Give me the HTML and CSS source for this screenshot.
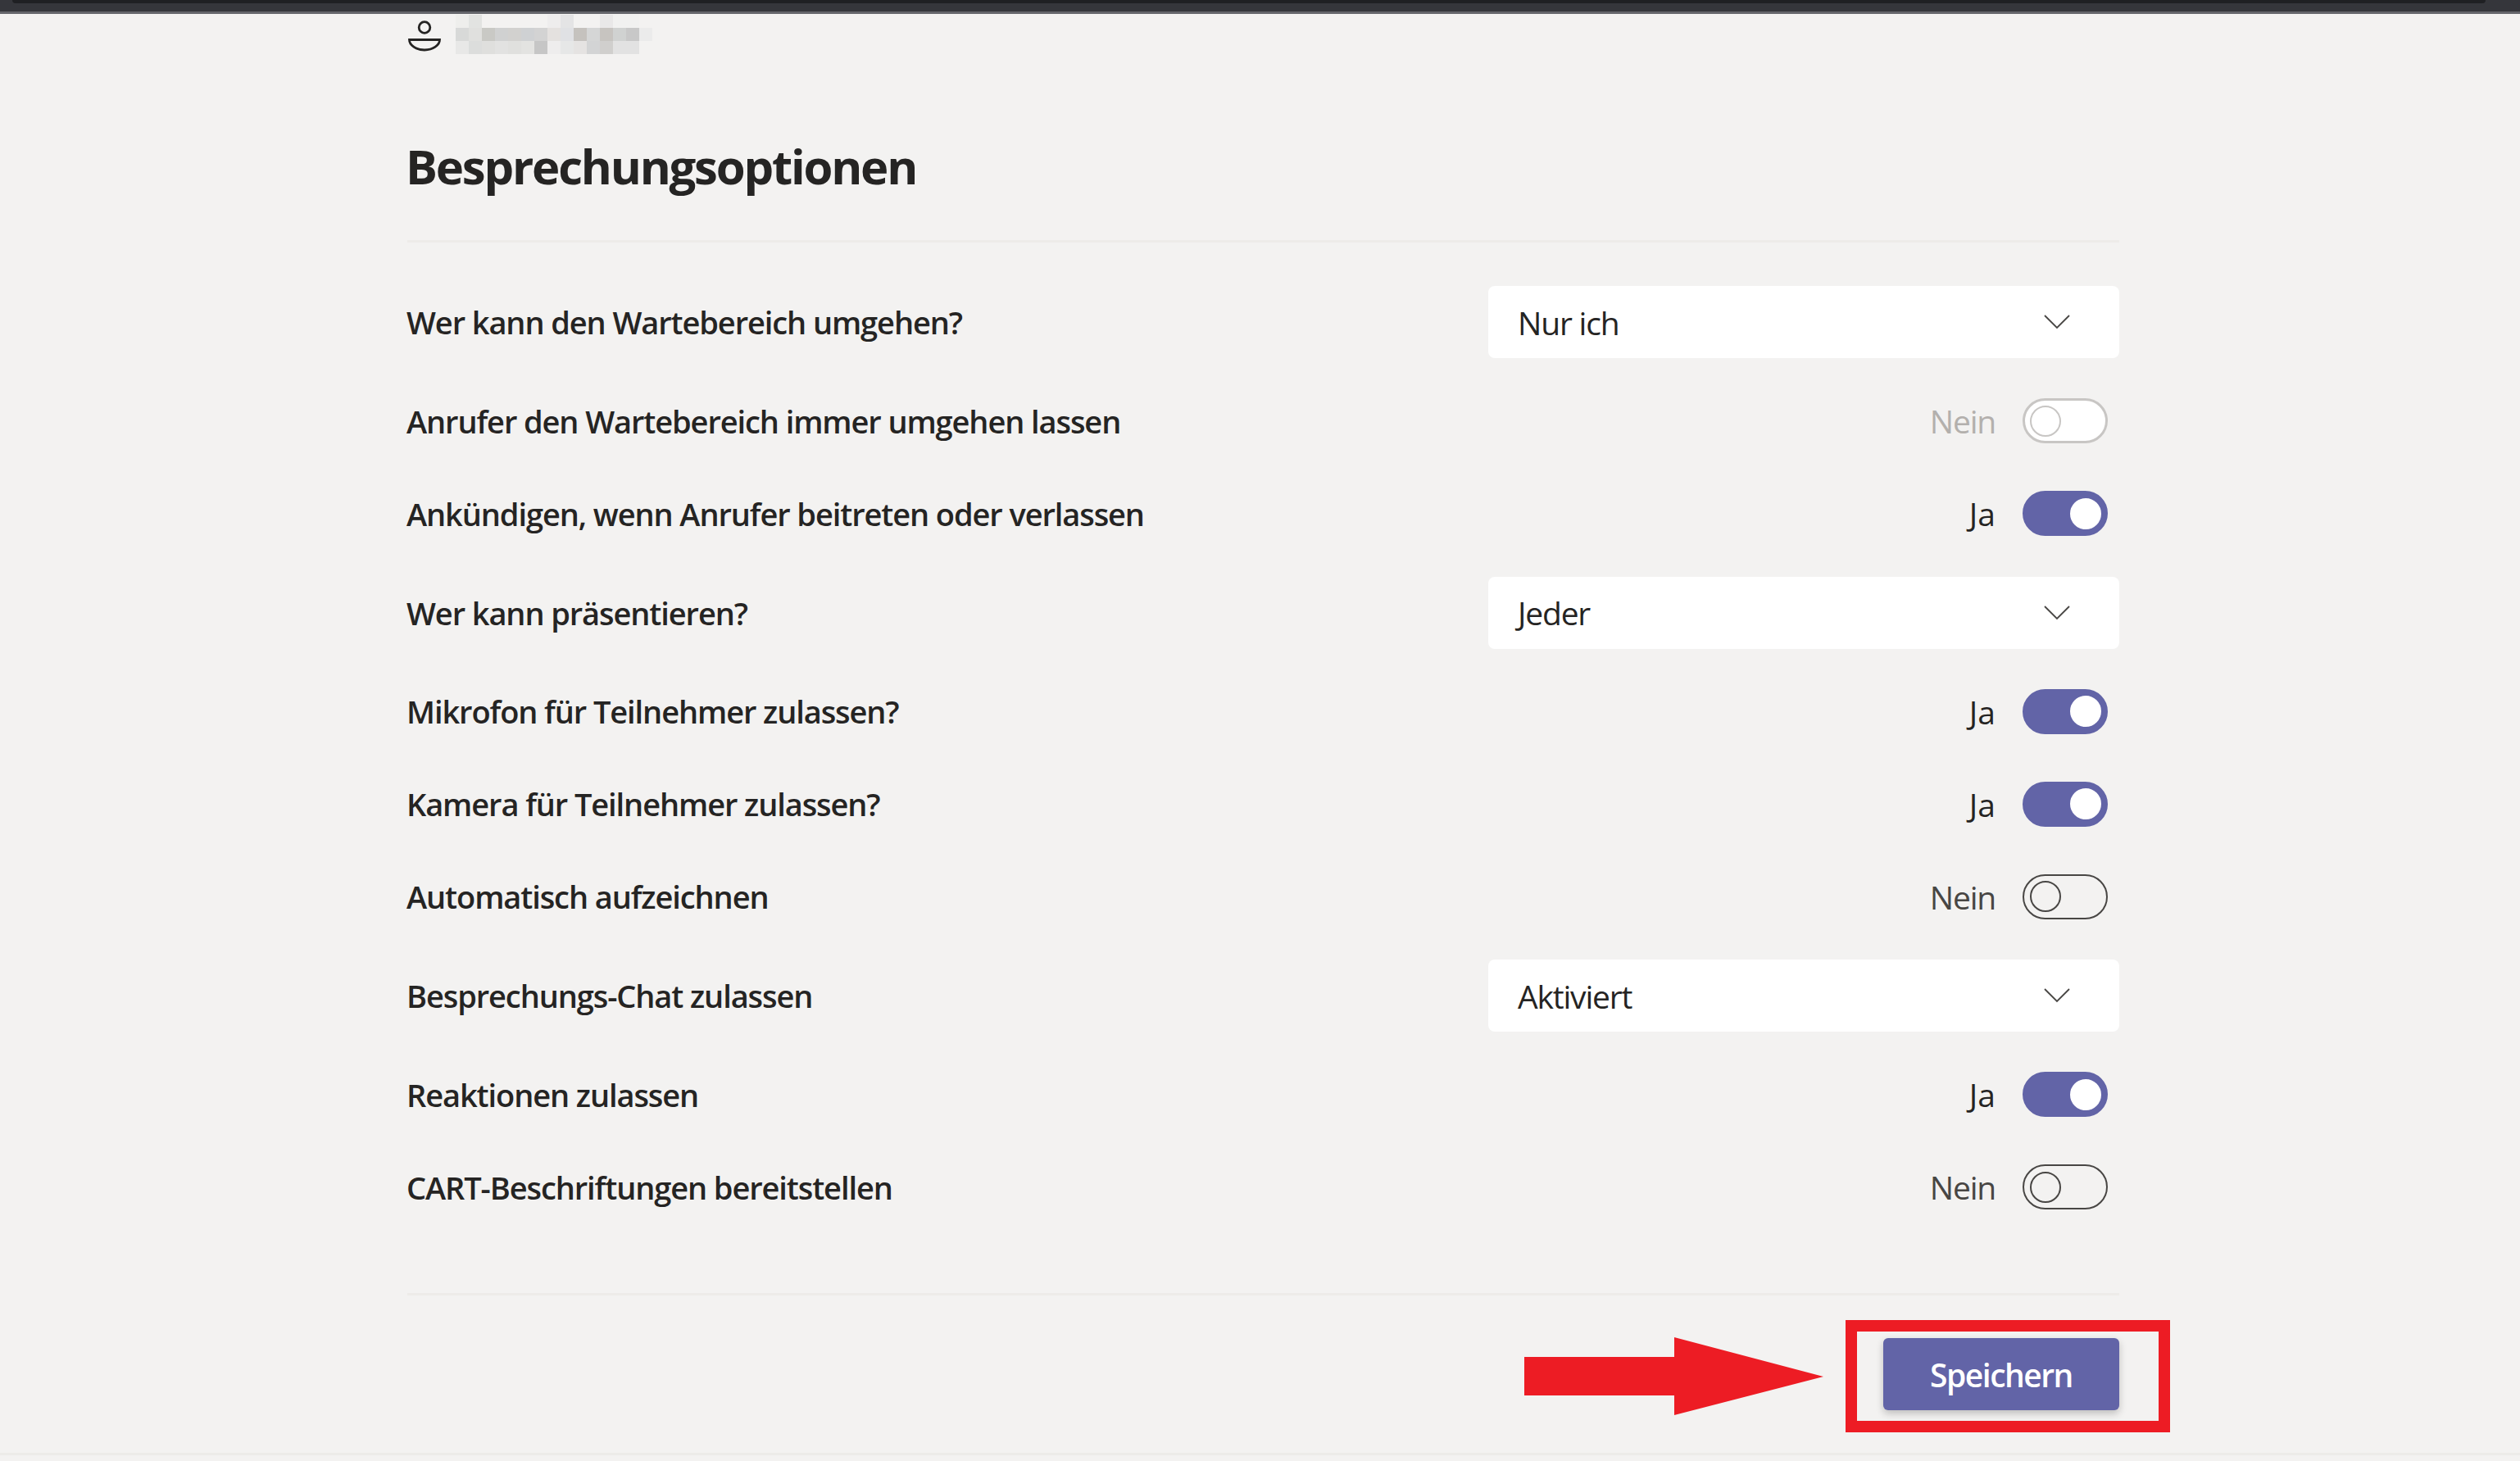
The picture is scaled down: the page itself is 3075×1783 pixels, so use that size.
FILE: index.html
```html
<!DOCTYPE html>
<html lang="de">
<head>
<meta charset="utf-8">
<title>Besprechungsoptionen</title>
<link rel="stylesheet" href="styles.css">
</head>
<body>
<div class="topbar"><div class="topbar-strip"></div></div>
<main class="page">
  <div class="user">
    <svg class="user-icon" width="42" height="40" viewBox="0 0 42 40" fill="none" stroke="#252423" stroke-width="2.800">
      <circle cx="21" cy="9.500" r="6.800"/>
      <path d="M2.500 24.500h37c0 6.500-8 12.500-18.500 12.500S2.500 31 2.500 24.500z"/>
    </svg>
    <svg class="user-blur" width="240" height="48" viewBox="0 0 15 3" shape-rendering="crispEdges">
      <rect x="0" y="0" width="1" height="1" fill="#eeeeec"/><rect x="1" y="0" width="1" height="1" fill="#e2e3e1"/><rect x="7" y="0" width="1" height="1" fill="#eeeded"/><rect x="8" y="0" width="1" height="1" fill="#e4e4e5"/><rect x="11" y="0" width="1" height="1" fill="#e9e8e8"/><rect x="12" y="0" width="2" height="1" fill="#f1f1f0"/>
      <rect x="0" y="1" width="1" height="1" fill="#d8d9d8"/><rect x="1" y="1" width="1" height="1" fill="#e0e0de"/><rect x="2" y="1" width="1" height="1" fill="#c9c9c5"/><rect x="3" y="1" width="1" height="1" fill="#d0d1d1"/><rect x="4" y="1" width="1" height="1" fill="#d2d1cf"/><rect x="5" y="1" width="1" height="1" fill="#cfd1d3"/><rect x="6" y="1" width="1" height="1" fill="#d3d3d3"/><rect x="7" y="1" width="1" height="1" fill="#e4e1df"/><rect x="8" y="1" width="1" height="1" fill="#e0e1e4"/><rect x="9" y="1" width="1" height="1" fill="#c5c2be"/><rect x="10" y="1" width="1" height="1" fill="#d5d6d6"/><rect x="11" y="1" width="1" height="1" fill="#c7c4c0"/><rect x="12" y="1" width="1" height="1" fill="#d0d2d1"/><rect x="13" y="1" width="1" height="1" fill="#c8c8c8"/><rect x="14" y="1" width="1" height="1" fill="#ebebeb"/>
      <rect x="0" y="2" width="1" height="1" fill="#e8e8e7"/><rect x="1" y="2" width="1" height="1" fill="#dcdddc"/><rect x="2" y="2" width="1" height="1" fill="#dfdfdd"/><rect x="3" y="2" width="1" height="1" fill="#e2e2e1"/><rect x="4" y="2" width="1" height="1" fill="#e0e0de"/><rect x="5" y="2" width="1" height="1" fill="#e3e3e1"/><rect x="6" y="2" width="1" height="1" fill="#c6c6c6"/><rect x="7" y="2" width="1" height="1" fill="#eeeded"/><rect x="8" y="2" width="1" height="1" fill="#e6e7e7"/><rect x="9" y="2" width="1" height="1" fill="#e5e3e2"/><rect x="10" y="2" width="1" height="1" fill="#d3d4d5"/><rect x="11" y="2" width="1" height="1" fill="#d0cfcd"/><rect x="12" y="2" width="2" height="1" fill="#e2e2e2"/>
    </svg>
  </div>
  <h1 class="title"><span class="title-text">Besprechungsoptionen</span></h1>
  <section class="options">
    <div class="row row-select">
      <span class="label">Wer kann den Wartebereich umgehen?</span>
      <div class="select"><span>Nur ich</span><svg class="chevron" width="32" height="18" viewBox="0 0 32 18" fill="none" stroke="#484644" stroke-width="1.800"><path d="M1 1l15 15L31 1"/></svg></div>
    </div>
    <div class="row row-toggle">
      <span class="label">Anrufer den Wartebereich immer umgehen lassen</span>
      <div class="control is-disabled"><span class="state">Nein</span><span class="toggle"><i class="knob"></i></span></div>
    </div>
    <div class="row row-toggle">
      <span class="label">Ankündigen, wenn Anrufer beitreten oder verlassen</span>
      <div class="control is-on"><span class="state">Ja</span><span class="toggle"><i class="knob"></i></span></div>
    </div>
    <div class="row row-select">
      <span class="label">Wer kann präsentieren?</span>
      <div class="select"><span>Jeder</span><svg class="chevron" width="32" height="18" viewBox="0 0 32 18" fill="none" stroke="#484644" stroke-width="1.800"><path d="M1 1l15 15L31 1"/></svg></div>
    </div>
    <div class="row row-toggle">
      <span class="label">Mikrofon für Teilnehmer zulassen?</span>
      <div class="control is-on"><span class="state">Ja</span><span class="toggle"><i class="knob"></i></span></div>
    </div>
    <div class="row row-toggle">
      <span class="label">Kamera für Teilnehmer zulassen?</span>
      <div class="control is-on"><span class="state">Ja</span><span class="toggle"><i class="knob"></i></span></div>
    </div>
    <div class="row row-toggle">
      <span class="label">Automatisch aufzeichnen</span>
      <div class="control"><span class="state">Nein</span><span class="toggle"><i class="knob"></i></span></div>
    </div>
    <div class="row row-select">
      <span class="label">Besprechungs-Chat zulassen</span>
      <div class="select"><span>Aktiviert</span><svg class="chevron" width="32" height="18" viewBox="0 0 32 18" fill="none" stroke="#484644" stroke-width="1.800"><path d="M1 1l15 15L31 1"/></svg></div>
    </div>
    <div class="row row-toggle">
      <span class="label">Reaktionen zulassen</span>
      <div class="control is-on"><span class="state">Ja</span><span class="toggle"><i class="knob"></i></span></div>
    </div>
    <div class="row row-toggle">
      <span class="label">CART-Beschriftungen bereitstellen</span>
      <div class="control"><span class="state">Nein</span><span class="toggle"><i class="knob"></i></span></div>
    </div>
  </section>
  <footer class="actions"><button class="save" type="button">Speichern</button></footer>
</main>
<div class="page-end"></div>
<svg class="mark-arrow" width="365" height="95" viewBox="0 0 365 95"><polygon points="0,24 183,24 183,0 365,48 183,95 183,71 0,71" fill="#ed1c24"/></svg>
<div class="mark-box"></div>
</body>
</html>
```
FILE: styles.css
```css
* { box-sizing: border-box; }
html, body { margin: 0; padding: 0; }
body {
  position: relative;
  width: 3075px;
  height: 1783px;
  overflow: hidden;
  background: #f3f2f1;
  color: #252423;
  font-family: "Open Sans", "Noto Sans", sans-serif;
}
.topbar {
  height: 17px;
  background: #35363b;
  border-bottom: 3px solid #65666b;
  padding: 0 42px 0 15px;
}
.topbar-strip {
  height: 4px;
  background: #1f2023;
  border-radius: 0 0 6px 6px;
}
.page {
  width: 2089px;
  margin-left: 497px;
}
.user {
  display: flex;
  align-items: center;
  height: 50px;
  gap: 17px;
}
.user-icon { display: block; margin-top: 4px; }
.title {
  margin: 0;
  height: 229px;
  padding-top: 98px;
  border-bottom: 3px solid #edebe9;
  font-size: 58px;
  line-height: 76px;
  font-weight: 700;
  letter-spacing: -2.2px;
}
.title-text { margin-left: -2px; }
.options {
  padding-top: 32.75px;
  height: 1285px;
  border-bottom: 3px solid #edebe9;
}
.row {
  display: flex;
  align-items: center;
  justify-content: space-between;
}
.row-select { height: 128.5px; }
.row-toggle { height: 113px; }
.label {
  margin-left: -1px;
  font-size: 38px;
  font-weight: 600;
  letter-spacing: -1.09px;
}
.select {
  display: flex;
  align-items: center;
  justify-content: space-between;
  width: 770px;
  height: 88px;
  padding: 0 60px 0 36px;
  background: #fff;
  border-radius: 8px;
  font-size: 39px;
  letter-spacing: -1.2px;
}
.chevron { display: block; }
.control {
  display: flex;
  align-items: center;
  gap: 33px;
  padding-right: 14px;
}
.state {
  font-size: 39px;
  letter-spacing: -1.2px;
  color: #484644;
}
.is-on .state { color: #252423; letter-spacing: 0; }
.toggle {
  display: flex;
  align-items: center;
  width: 104px;
  height: 55px;
  padding: 0 7px;
  border: 2px solid #484644;
  border-radius: 28px;
}
.knob {
  display: block;
  width: 38px;
  height: 38px;
  border: 2px solid #484644;
  border-radius: 50%;
}
.is-on .toggle {
  justify-content: flex-end;
  padding: 0 6px;
  background: #6264a7;
  border-color: #6264a7;
}
.is-on .knob { background: #fff; border-color: #fff; }
.is-disabled .state { color: #b3b0ad; }
.is-disabled .toggle { background: #fff; border: 3px solid #c8c6c4; padding: 0 6px; }
.is-disabled .knob { border-color: #c8c6c4; background: #fff; }
.actions {
  display: flex;
  justify-content: flex-end;
  padding-top: 52px;
}
.save {
  width: 288px;
  height: 88px;
  border: 0;
  border-radius: 6px;
  background: #6264a7;
  color: #fff;
  font-family: inherit;
  font-size: 39px;
  font-weight: 600;
  letter-spacing: -1.5px;
  box-shadow: 0 4px 10px rgba(0, 0, 0, 0.22);
}
.page-end {
  position: absolute;
  left: 0;
  right: 0;
  top: 1773px;
  height: 3px;
  background: #ecebe8;
}
.mark-arrow {
  position: absolute;
  left: 1860px;
  top: 1632px;
}
.mark-box {
  position: absolute;
  left: 2252px;
  top: 1611px;
  width: 396px;
  height: 137px;
  border: 14px solid #ed1c24;
}
```
